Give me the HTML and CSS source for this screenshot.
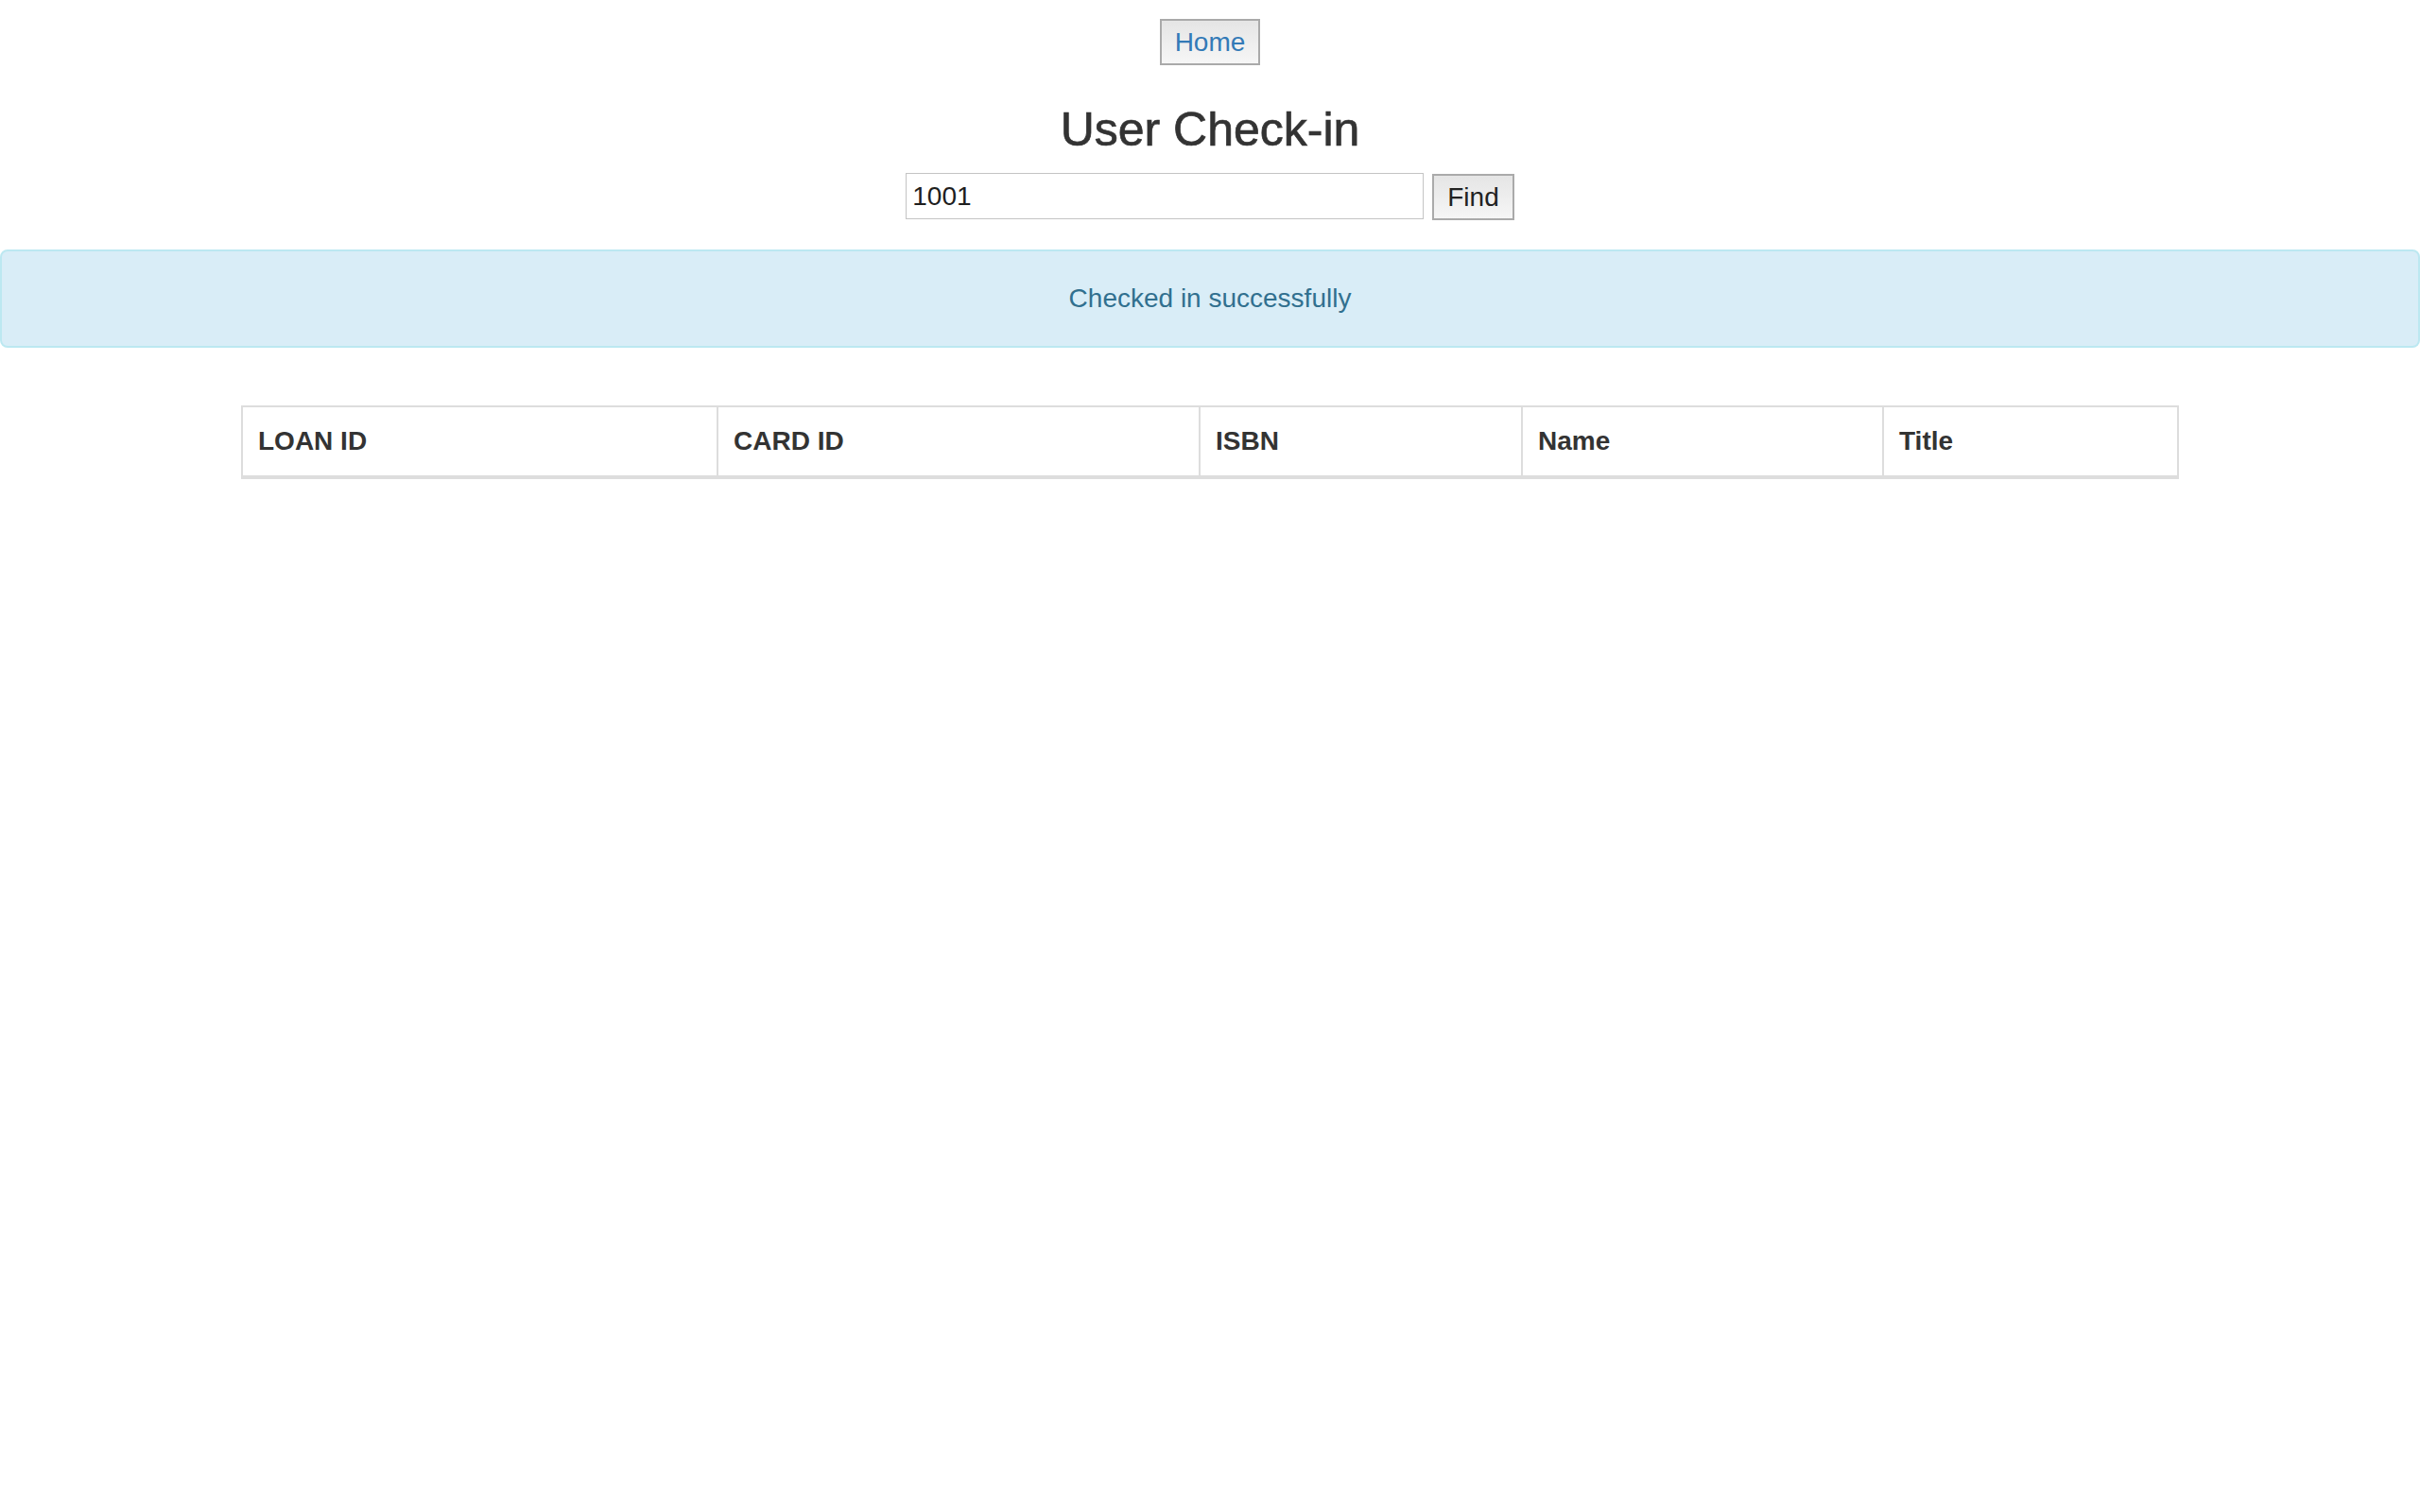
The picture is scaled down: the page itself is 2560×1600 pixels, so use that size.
FILE: index.html
```html
<!DOCTYPE html>
<html lang="en">
<head>
<meta charset="utf-8">
<title>User Check-in</title>
<link rel="stylesheet" href="styles.css">
</head>
<body>
  <nav class="topnav">
    <button class="btn" type="button"><span class="btn-link">Home</span></button>
  </nav>
  <h1 class="title">User Check-in</h1>
  <form class="search">
    <input class="search-input" type="text" value="1001">
    <button class="btn btn-find" type="button">Find</button>
  </form>
  <div class="alert">Checked in successfully</div>
  <table class="loans">
    <colgroup>
      <col class="c1"><col class="c2"><col class="c3"><col class="c4"><col class="c5">
    </colgroup>
    <thead>
      <tr>
        <th>LOAN ID</th>
        <th>CARD ID</th>
        <th>ISBN</th>
        <th>Name</th>
        <th>Title</th>
      </tr>
    </thead>
    <tbody></tbody>
  </table>
</body>
</html>
```

FILE: styles.css
```css
* { box-sizing: border-box; }

html, body {
  margin: 0;
  padding: 0;
  background: #fff;
}

body {
  font-family: "Liberation Sans", Arial, sans-serif;
  font-size: 28px;
  line-height: 40px;
  color: #333;
}

.topnav {
  display: flex;
  justify-content: center;
  padding-top: 20px;
}

.btn {
  height: 49px;
  padding: 0 14px;
  border: 2px solid #aaaaaa;
  background: linear-gradient(#e5e5e5, #f6f6f6);
  font-family: "Liberation Sans", Arial, sans-serif;
  font-size: 28px;
  line-height: 40px;
  color: #222;
  border-radius: 0;
  margin: 0;
}

.btn-link {
  color: #337ab7;
}

.title {
  margin: 41px 0 0;
  font-size: 50px;
  line-height: 55px;
  font-weight: 500;
  -webkit-text-stroke: 0.7px #333;
  text-align: center;
  color: #333;
}

.search {
  display: flex;
  justify-content: center;
  align-items: flex-start;
  gap: 9px;
  margin: 18px 0 0;
}

.search-input {
  width: 548px;
  height: 49px;
  padding: 0 6px;
  border: 1px solid #c4c4c4;
  font-family: "Liberation Sans", Arial, sans-serif;
  font-size: 28px;
  color: #1e1e1e;
  margin: 0;
  outline: none;
}

.btn-find {
  margin-top: 1px;
}

.alert {
  margin: 31px 0 0;
  padding: 30px 30px;
  border: 2px solid #bce8f1;
  border-radius: 8px;
  background: #d9edf7;
  color: #31708f;
  text-align: center;
}

.loans {
  width: 2048px;
  margin: 61px auto 0;
  border-collapse: collapse;
  table-layout: fixed;
  border: 2px solid #dddddd;
}

.loans .c1 { width: 503px; }
.loans .c2 { width: 510px; }
.loans .c3 { width: 341px; }
.loans .c4 { width: 382px; }
.loans .c5 { width: 312px; }

.loans th {
  text-align: left;
  font-weight: bold;
  padding: 16px 16px;
  line-height: 40px;
  border: 2px solid #dddddd;
  border-bottom-width: 4px;
  color: #333;
}
```
